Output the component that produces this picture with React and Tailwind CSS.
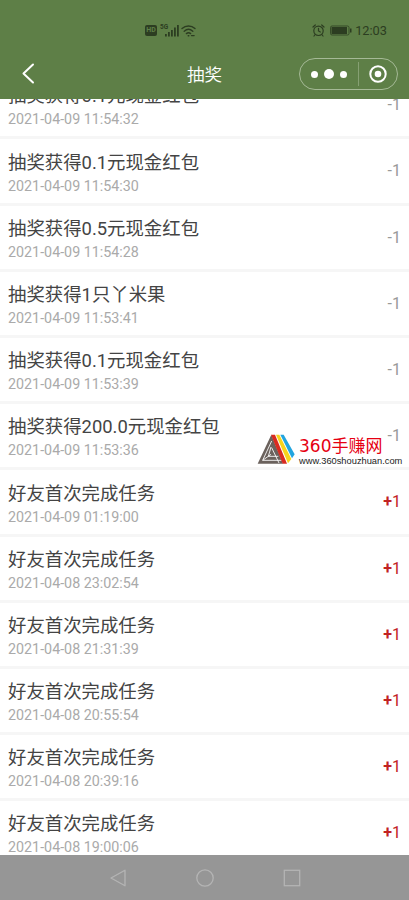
import React from 'react';

const records = [
  { title: '抽奖获得0.1元现金红包', time: '2021-04-09 11:54:32', change: -1 },
  { title: '抽奖获得0.1元现金红包', time: '2021-04-09 11:54:30', change: -1 },
  { title: '抽奖获得0.5元现金红包', time: '2021-04-09 11:54:28', change: -1 },
  { title: '抽奖获得1只丫米果', time: '2021-04-09 11:53:41', change: -1 },
  { title: '抽奖获得0.1元现金红包', time: '2021-04-09 11:53:39', change: -1 },
  { title: '抽奖获得200.0元现金红包', time: '2021-04-09 11:53:36', change: -1 },
  { title: '好友首次完成任务', time: '2021-04-09 01:19:00', change: 1 },
  { title: '好友首次完成任务', time: '2021-04-08 23:02:54', change: 1 },
  { title: '好友首次完成任务', time: '2021-04-08 21:31:39', change: 1 },
  { title: '好友首次完成任务', time: '2021-04-08 20:55:54', change: 1 },
  { title: '好友首次完成任务', time: '2021-04-08 20:39:16', change: 1 },
  { title: '好友首次完成任务', time: '2021-04-08 19:00:06', change: 1 },
];

function StatusBar() {
  return (
    <div className="flex h-[49px] items-center pt-[12px] pl-[145px] pr-[22px] text-[#2c3d21]">
      <span className="flex h-[11px] w-[12px] items-center justify-center rounded-[2px] bg-[#2c3d21] text-[7px] font-bold leading-none text-[#5e7f47]">
        HD
      </span>
      {/* Mobile signal */}
      <div className="ml-[3px] flex h-[13px] items-end">
        <span className="-mr-[3px] self-start text-[6.5px] font-bold leading-[6px]">5G</span>
        <svg className="h-[13px] w-[14px]" viewBox="0 0 14 13" fill="currentColor">
          <rect x="0" y="10" width="1.8" height="2.5" />
          <rect x="3" y="8" width="1.8" height="4.5" />
          <rect x="6" y="6" width="1.8" height="6.5" />
          <rect x="9" y="3.5" width="1.8" height="9" />
          <rect x="12" y="1" width="1.8" height="11.5" />
        </svg>
      </div>
      {/* Wifi */}
      <svg className="ml-[2px] h-[13px] w-[15px]" viewBox="0 0 15 13" fill="none" stroke="currentColor" strokeWidth="1.4" strokeLinecap="round">
        <path d="M1 4.6C4.8 1.2 10.2 1.2 14 4.6" />
        <path d="M3.2 7.2C5.8 4.9 9.2 4.9 11.8 7.2" />
        <path d="M5.4 9.6C6.7 8.5 8.3 8.5 9.6 9.6" />
        <path d="M7.2 11.8h.6M10.5 11.6h2.6" />
      </svg>
      {/* Alarm */}
      <svg className="ml-auto h-[13px] w-[13px]" viewBox="0 0 13 13" fill="none" stroke="currentColor" strokeWidth="1.2" strokeLinecap="round">
        <circle cx="6.5" cy="6.8" r="4.7" />
        <path d="M6.5 4.3V7l1.8 1M1 3l2.3-2M12 3L9.7 1M3.2 10.5L2 12M9.8 10.5L11 12" />
      </svg>
      {/* Battery */}
      <svg className="ml-[5px] h-[11px] w-[22px]" viewBox="0 0 22 11">
        <rect x="0.5" y="1" width="18.5" height="9" rx="1.5" fill="none" stroke="currentColor" strokeWidth="0.8" />
        <rect x="1.5" y="2" width="15.5" height="7" fill="currentColor" />
        <rect x="20" y="3.5" width="1.5" height="4" fill="currentColor" />
      </svg>
      <span className="ml-[3px] pt-[1px] text-[12.8px] leading-none">12:03</span>
    </div>
  );
}

function NavBar() {
  return (
    <div className="grid h-[50px] grid-cols-[1fr_auto_1fr] items-center px-[11px] text-white">
      <svg className="ml-[10px] h-[22px] w-[14px]" viewBox="0 0 14 22" fill="none" stroke="currentColor" strokeWidth="2" strokeLinecap="round" strokeLinejoin="round">
        <path d="M12 1.5L2.5 10.5L12 19.5" />
      </svg>
      <h1 className="pt-[3px] text-center text-[17.6px] font-[350] leading-none">抽奖</h1>
      {/* Mini program capsule */}
      <div className="flex h-[32px] w-[99px] items-center justify-self-end rounded-full border border-[#a5b996]">
        <div className="flex h-[24px] w-[59px] items-center justify-center gap-[6px] border-r border-[#86a073]">
          <span className="h-[7px] w-[7px] rounded-full bg-white" />
          <span className="h-[10px] w-[10px] rounded-full bg-white" />
          <span className="h-[7px] w-[7px] rounded-full bg-white" />
        </div>
        <svg className="mx-auto h-[18px] w-[18px]" viewBox="0 0 18 18">
          <circle cx="9" cy="9" r="7.7" fill="none" stroke="currentColor" strokeWidth="2" />
          <circle cx="9" cy="9" r="3.3" fill="currentColor" />
        </svg>
      </div>
    </div>
  );
}

function RecordItem({ title, time, change }) {
  return (
    <li className="flex h-[66.2px] shrink-0 items-center justify-between border-b-[3px] border-[#f6f6f6] px-[8px]">
      <div className="pt-[4.2px]">
        <p className="text-[18.4px] font-[390] leading-[26px] text-[#444444]">{title}</p>
        <p className="text-[14.3px] leading-[21px] text-[#aaaaaa]">{time}</p>
      </div>
      {change > 0 ? (
        <span className="pt-[1px] text-[16px] text-[#c22222]"><b>+</b>{change}</span>
      ) : (
        <span className="pt-[1px] text-[16px] text-[#999999]">{change}</span>
      )}
    </li>
  );
}

function Watermark() {
  return (
    <div className="absolute left-[257px] top-[433px] flex items-start">
      <svg className="h-[34px] w-[38px]" viewBox="0 0 114 102">
        <path d="M43 5L2 92H78Z" fill="#6b625d" />
        {/* Seams between the folded bands */}
        <g fill="none" stroke="#fff" strokeWidth="2.6">
          <path d="M44 24L17 82L42 64" />
          <path d="M17 82H74" />
          <path d="M42 42L34 70H64" />
          <path d="M44 44L66 90" />
        </g>
        <path d="M42 5H54L90 92H77Z" fill="#d92b20" />
        <path d="M57 5H67L103 78L93 91Z" fill="#f7d31c" />
        <path d="M70 5H80L113 64L105 76Z" fill="#21a5df" />
      </svg>
      <div className="ml-[4px] pt-[3px]">
        <p className="whitespace-nowrap font-['DejaVu_Sans','Noto_Sans_CJK_SC',sans-serif] text-[17px] leading-[21px] text-[#e60012]">360手赚网</p>
        <p className="whitespace-nowrap font-['Liberation_Sans',sans-serif] text-[9.3px] leading-[9px] text-[#222222]">www.360shouzhuan.com</p>
      </div>
    </div>
  );
}

export default function App() {
  return (
    <div className="relative flex h-[900px] w-full flex-col overflow-hidden bg-white font-['Roboto','Noto_Sans_CJK_SC',sans-serif]">
      <header className="shrink-0 bg-[#5e7f47]">
        <StatusBar />
        <NavBar />
      </header>

      <main className="min-h-0 flex-1 overflow-hidden">
        <ul className="-mt-[25.8px] flex flex-col">
          {records.map((record) => (
            <RecordItem key={record.time} {...record} />
          ))}
        </ul>
      </main>

      {/* System navigation */}
      <footer className="flex h-[45px] shrink-0 items-center justify-center gap-[69px] bg-[#969696] text-[#b4b4b4]">
        <svg className="h-[18px] w-[18px]" viewBox="0 0 18 18" fill="none" stroke="currentColor" strokeWidth="1.3" strokeLinejoin="round">
          <path d="M16 1.2V16.8L2 9Z" />
        </svg>
        <svg className="h-[18px] w-[18px]" viewBox="0 0 18 18" fill="none" stroke="currentColor" strokeWidth="1.3">
          <circle cx="9" cy="9" r="8.2" />
        </svg>
        <svg className="h-[18px] w-[18px]" viewBox="0 0 18 18" fill="none" stroke="currentColor" strokeWidth="1.3">
          <rect x="1.3" y="1.3" width="15.4" height="15.4" />
        </svg>
      </footer>

      <Watermark />
    </div>
  );
}
